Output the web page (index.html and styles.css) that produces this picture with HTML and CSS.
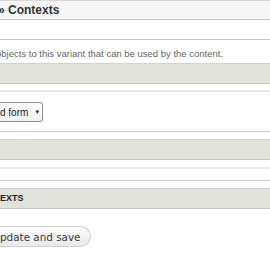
FILE: index.html
```html
<!DOCTYPE html>
<html lang="en">
<head>
    <meta charset="UTF-8">
    <title>Contexts</title>
    <link rel="stylesheet" href="styles.css">
</head>
<body>

<div class="page">
    <h2 class="pane-title"><span class="raquo">&raquo;</span> Contexts</h2>
    <div class="pane-row"></div>

    <div class="description"><span class="cut-o">o</span>bjects to this variant that can be used by the content.</div>
    <div class="table-head"></div>

    <div class="fieldset">
        <div class="select">d form <span class="arrow">&#9660;</span></div>
    </div>

    <div class="table-head spaced"></div>

    <div class="table-row"></div>

    <div class="table-head spaced"><span class="th-label">EXTS</span></div>

    <div class="actions">
        <button class="form-submit">pdate and save</button>
    </div>
</div>

</body>
</html>
```

FILE: styles.css
```css
/* Global */
* {
    box-sizing: border-box;
    margin: 0;
    padding: 0;
}
body {
    width: 270px;
    height: 270px;
    overflow: hidden;
    background: #fff;
    color: #333;
    font-family: 'Liberation Sans', Arial, sans-serif;
}

/* Pane title */
.pane-title {
    height: 20px;
    border-top: 1px solid #d8d8d8;
    border-bottom: 1px solid #c6c6c6;
    background-color: #f7f7f7;
    font-size: 12px;
    font-weight: 700;
    line-height: 18px;
    color: #333;
    white-space: nowrap;
}
.raquo {
    margin-left: -2px;
}
.pane-row {
    height: 20px;
    border-bottom: 1px solid #c6c6c6;
}

/* Description */
.description {
    height: 23px;
    padding-top: 8px;
    font-size: 9.5px;
    line-height: 11px;
    color: #666;
    white-space: nowrap;
}
.cut-o {
    margin-left: -4px;
}

/* Table heads */
.table-head {
    height: 21px;
    border-top: 1px solid #d2d3cd;
    border-bottom: 1px solid #c4c5bf;
    background-color: #e1e2dc;
}
.table-head.spaced {
    margin-top: 7px;
}
.th-label {
    display: block;
    font-size: 9px;
    font-weight: 700;
    line-height: 19px;
    color: #222;
}

/* Fieldset with select */
.fieldset {
    height: 42px;
    margin-top: 6px;
    padding-top: 10px;
    border-top: 2px solid #e6e6e6;
    border-bottom: 1px solid #cfcfcf;
}
.select {
    display: flex;
    align-items: center;
    width: 43px;
    height: 20px;
    border: 1px solid #8e8e8e;
    border-left: none;
    border-radius: 0 3px 3px 0;
    background: linear-gradient(#fff, #f1f1f1);
    font-size: 10px;
    color: #222;
    white-space: nowrap;
}
.arrow {
    margin-left: 6px;
    font-size: 6px;
}

/* Plain row */
.table-row {
    height: 14px;
    margin-top: 7px;
    border-top: 2px solid #e6e6e6;
    border-bottom: 1px solid #cfcfcf;
}

/* Actions */
.actions {
    margin-top: 17px;
}
.form-submit {
    display: block;
    width: 92px;
    height: 21px;
    margin-left: -1px;
    padding-left: 1px;
    text-align: left;
    border: 1px solid #d0d0d0;
    border-left: none;
    border-radius: 0 11px 11px 0;
    background: linear-gradient(#fdfdfd, #e9e9e9);
    font-family: 'DejaVu Sans', Verdana, sans-serif;
    font-size: 10.4px;
    color: #3a3a3a;
}
```
